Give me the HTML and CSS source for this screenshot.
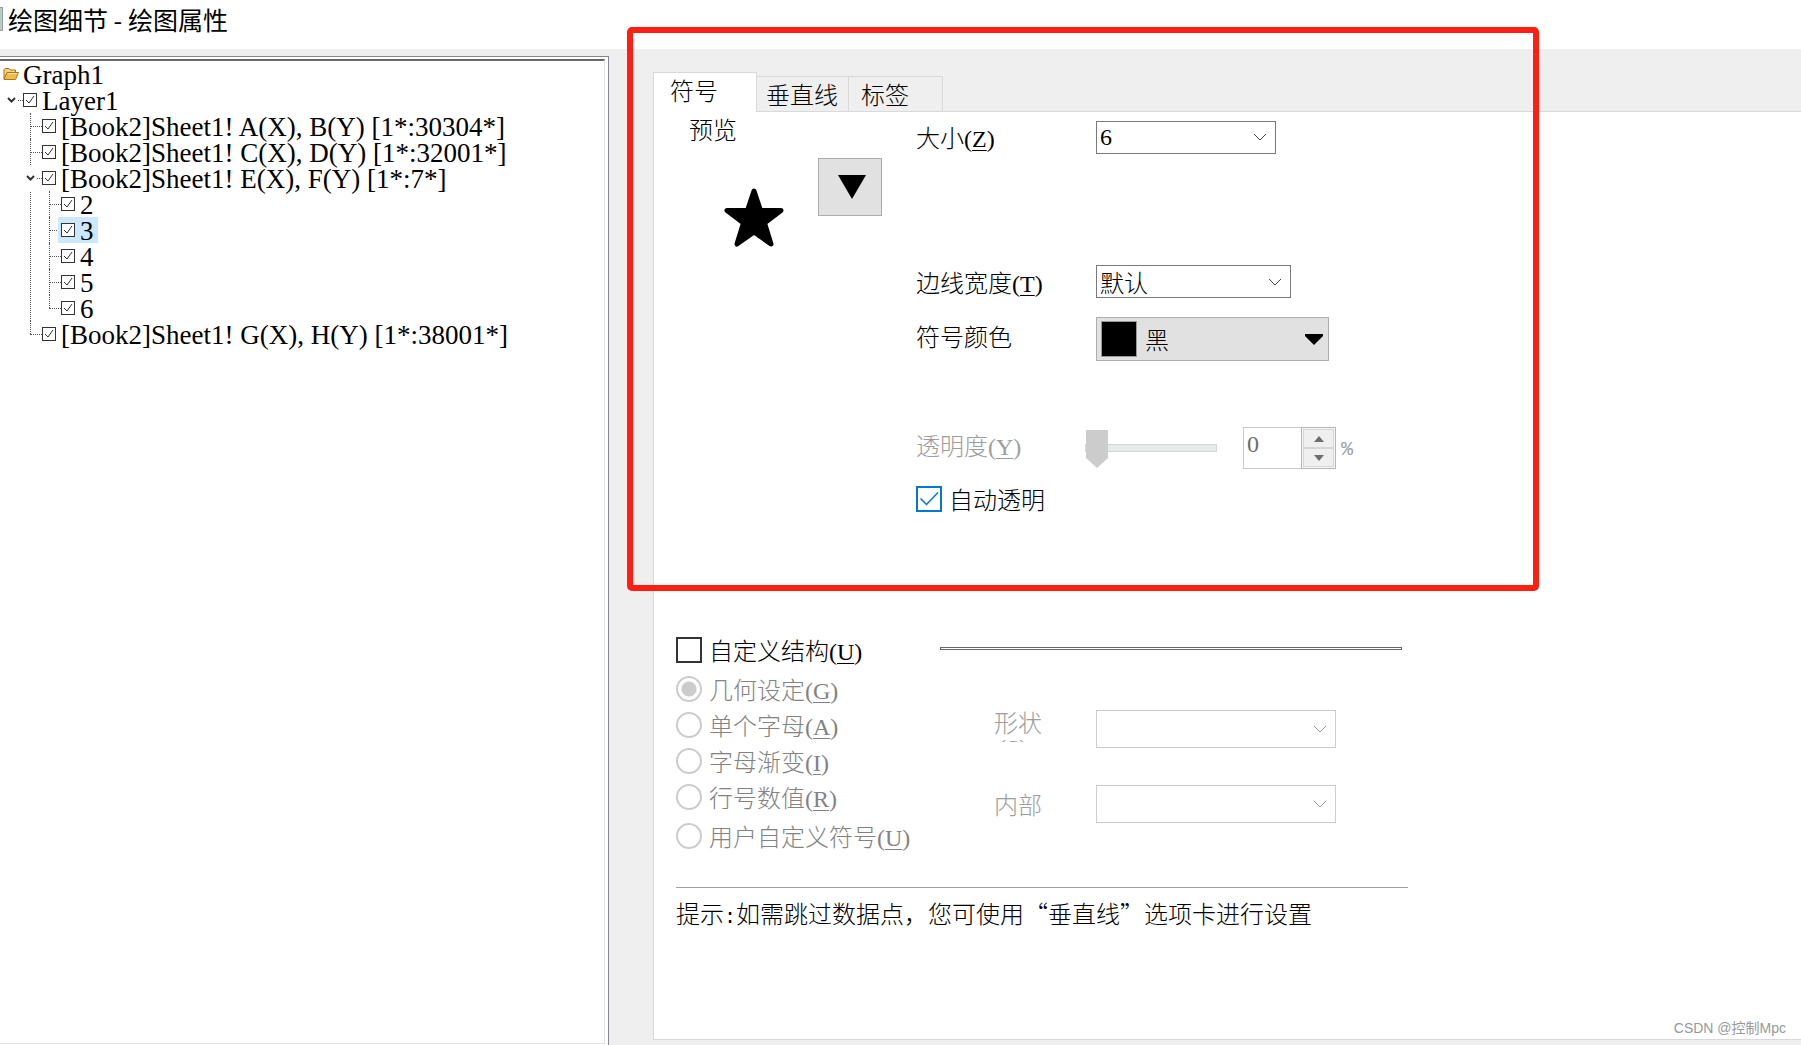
FILE: index.html
```html
<!DOCTYPE html>
<html lang="zh-CN">
<head>
<meta charset="utf-8">
<meta name="viewport" content="width=device-width, initial-scale=1">
<title>绘图细节 - 绘图属性</title>
<link rel="stylesheet" href="styles.css">
</head>
<body>
<header class="titlebar">
  <span class="app-icon"></span>
  <h1 class="title">绘图细节 - 绘图属性</h1>
</header>
<main class="dialog">
  <nav class="tree-pane">
    <div class="tree-view">
      <ul class="tree">
        <li class="root">
          <div class="root-row">
            <svg class="folder" width="16" height="14" viewBox="0 0 16 14"><path d="M1 12V2.500L2 1.500H6L7.500 3H12.500V5.500" fill="#f4d078" stroke="#a8771c"/><path d="M1 12.500L4 5.500H15.500L12.500 12.500Z" fill="#f3bd45" stroke="#a8771c"/><path d="M4.800 6.500H14" stroke="#ffe9a8"/></svg>
            <span>Graph1</span>
          </div>
          <ul class="branch">
            <li class="node">
              <div class="row">
                <button class="expander" aria-label="折叠"><svg width="9" height="6" viewBox="0 0 9 6"><path d="M1 1L4.500 4.500L8 1" fill="none" stroke="#333" stroke-width="2"/></svg></button>
                <label class="item"><input class="tick" type="checkbox" checked><span>Layer1</span></label>
              </div>
              <ul class="branch">
                <li class="node"><div class="row"><label class="item"><input class="tick" type="checkbox" checked><span>[Book2]Sheet1! A(X), B(Y) [1*:30304*]</span></label></div></li>
                <li class="node"><div class="row"><label class="item"><input class="tick" type="checkbox" checked><span>[Book2]Sheet1! C(X), D(Y) [1*:32001*]</span></label></div></li>
                <li class="node">
                  <div class="row">
                    <button class="expander" aria-label="折叠"><svg width="9" height="6" viewBox="0 0 9 6"><path d="M1 1L4.500 4.500L8 1" fill="none" stroke="#333" stroke-width="2"/></svg></button>
                    <label class="item"><input class="tick" type="checkbox" checked><span>[Book2]Sheet1! E(X), F(Y) [1*:7*]</span></label>
                  </div>
                  <ul class="branch">
                    <li class="node"><div class="row"><label class="item"><input class="tick" type="checkbox" checked><span>2</span></label></div></li>
                    <li class="node"><div class="row"><label class="item selected"><input class="tick" type="checkbox" checked><span>3</span></label></div></li>
                    <li class="node"><div class="row"><label class="item"><input class="tick" type="checkbox" checked><span>4</span></label></div></li>
                    <li class="node"><div class="row"><label class="item"><input class="tick" type="checkbox" checked><span>5</span></label></div></li>
                    <li class="node"><div class="row"><label class="item"><input class="tick" type="checkbox" checked><span>6</span></label></div></li>
                  </ul>
                </li>
                <li class="node"><div class="row"><label class="item"><input class="tick" type="checkbox" checked><span>[Book2]Sheet1! G(X), H(Y) [1*:38001*]</span></label></div></li>
              </ul>
            </li>
          </ul>
        </li>
      </ul>
    </div>
  </nav>

  <section class="settings">
    <div class="tabs" role="tablist">
      <button class="tab active" role="tab" aria-selected="true">符号</button>
      <button class="tab" role="tab">垂直线</button>
      <button class="tab last" role="tab">标签</button>
    </div>
    <div class="panel" role="tabpanel">
      <div class="symbol">
        <div class="preview">
          <div class="preview-label">预览</div>
          <div class="preview-body">
            <svg class="star" width="60" height="60" viewBox="0 0 60 60"><path d="M30 3L36.500 22.500H57L40.500 35L47 56L30 44L13 56L19.500 35L3 22.500H23.500Z" fill="#000" stroke="#000" stroke-width="5" stroke-linejoin="round"/></svg>
            <button class="pick" aria-label="选择符号"><svg width="28" height="24" viewBox="0 0 28 24"><path d="M0 0H28L14 24Z"/></svg></button>
          </div>
        </div>
        <div class="form">
          <div class="field size">
            <label class="name" for="size">大小<span class="key">(<u>Z</u>)</span></label>
            <span class="combo w180"><select id="size" class="latin"><option>6</option></select><svg class="chev" width="14" height="8" viewBox="0 0 14 8"><path d="M1 1L7 7L13 1"/></svg></span>
          </div>
          <div class="field edge">
            <label class="name" for="edge">边线宽度<span class="key">(<u>T</u>)</span></label>
            <span class="combo w195"><select id="edge"><option>默认</option></select><svg class="chev" width="14" height="8" viewBox="0 0 14 8"><path d="M1 1L7 7L13 1"/></svg></span>
          </div>
          <div class="field color">
            <span class="name raised">符号颜色</span>
            <button class="color-button"><span class="swatch"></span><span>黑</span><svg class="arrow" width="18" height="11" viewBox="0 0 18 11"><path d="M0 0H18V2L9 11L0 2Z"/></svg></button>
          </div>
          <div class="field opacity">
            <label class="name raised off" for="opacity">透明度<span class="key">(<u>Y</u>)</span></label>
            <input id="opacity" class="slider" type="range" min="0" max="100" value="0" disabled>
            <span class="spin">
              <input class="spin-text" type="text" value="0" aria-label="透明度数值" disabled>
              <span class="spin-buttons">
                <button aria-label="增加" disabled><svg width="10" height="6" viewBox="0 0 10 6"><path d="M0 6L5 0L10 6Z"/></svg></button>
                <button aria-label="减少" disabled><svg width="10" height="6" viewBox="0 0 10 6"><path d="M0 0L5 6L10 0Z"/></svg></button>
              </span>
            </span>
            <span class="percent">%</span>
          </div>
          <label class="check auto"><input class="box blue" type="checkbox" checked><span>自动透明</span></label>
        </div>
      </div>

      <div class="custom">
        <div class="choices">
          <label class="check"><input class="box" type="checkbox"><span>自定义结构<span class="key">(<u>U</u>)</span></span></label>
          <div class="radios">
            <label class="radio"><input type="radio" name="kind" checked disabled><span>几何设定<span class="key">(<u>G</u>)</span></span></label>
            <label class="radio"><input type="radio" name="kind" disabled><span>单个字母<span class="key">(<u>A</u>)</span></span></label>
            <label class="radio"><input type="radio" name="kind" disabled><span>字母渐变<span class="key">(<u>I</u>)</span></span></label>
            <label class="radio"><input type="radio" name="kind" disabled><span>行号数值<span class="key">(<u>R</u>)</span></span></label>
            <label class="radio user"><input type="radio" name="kind" disabled><span>用户自定义符号<span class="key">(<u>U</u>)</span></span></label>
          </div>
        </div>
        <div class="shape">
          <div class="groove"></div>
          <div class="shape-row top">
            <label class="shape-name clipped" for="shape"><span>形状</span><span class="key">(<u>S</u>)</span></label>
            <span class="combo w240 off"><select id="shape" disabled><option></option></select><svg class="chev" width="14" height="8" viewBox="0 0 14 8"><path d="M1 1L7 7L13 1"/></svg></span>
          </div>
          <div class="shape-row">
            <label class="shape-name" for="interior">内部</label>
            <span class="combo w240 off"><select id="interior" disabled><option></option></select><svg class="chev" width="14" height="8" viewBox="0 0 14 8"><path d="M1 1L7 7L13 1"/></svg></span>
          </div>
        </div>
      </div>
      <hr class="rule">
      <p class="tip">提示<span class="colon">:</span>如需跳过数据点，您可使用“垂直线”选项卡进行设置</p>
    </div>
    <div class="highlight"></div>
    <div class="watermark">CSDN @控制Mpc</div>
  </section>
</main>
</body>
</html>
```

FILE: styles.css
```css
* { box-sizing: border-box; }

body {
  margin: 0;
  min-height: 100vh;
  display: flex;
  flex-direction: column;
  background: #fff;
  color: #000;
  font: 300 24px/30px "Noto Sans CJK SC", sans-serif;
}

button, input, select { font: inherit; color: inherit; margin: 0; padding: 0; }
button, select, input { border-radius: 0; }
ul { list-style: none; margin: 0; padding: 0; }

.key, .latin, .tree, .spin-text {
  font-family: "Liberation Serif", serif;
  font-size: 24px;
  font-weight: 400;
}
.tree { font-size: 27px; }
.key { line-height: 24px; }
.colon, .percent { font-family: "Liberation Mono", monospace; font-size: 20px; font-weight: 400; line-height: 24px; }
u { text-decoration-thickness: 1px; text-underline-offset: 3px; }

/* Title bar */
.titlebar { display: flex; align-items: center; gap: 5px; height: 49px; padding-bottom: 11px; }
.app-icon { width: 3px; height: 24px; border: 1px solid #999; border-left: 0; background: #b9cfc6; }
.title { margin: 0; font-size: 25px; font-weight: 400; }

.dialog { flex: 1; display: flex; background: #efefef; }

/* Tree */
.tree-pane {
  flex: 0 0 609px;
  display: flex;
  margin-top: 7px;
  padding: 2px 1px 1px 0;
  border-top: 1px solid #828790;
  border-right: 1px solid #828790;
  background: #fff;
}
.tree-view {
  flex: 1;
  margin-right: 2px;
  border-top: 2px solid #696969;
  border-right: 1px solid #e3e3e3;
  border-bottom: 1px solid #e3e3e3;
}
.root-row { display: flex; align-items: center; gap: 4px; height: 26px; padding-left: 3px; }
.root > .branch { padding-left: 11px; }
.branch { padding-left: 19px; }
.node { position: relative; }
.node::before {
  content: "";
  position: absolute;
  top: 0;
  bottom: 0;
  left: 0;
  border-left: 1px dotted #555;
}
.node:last-child::before { bottom: auto; height: 13px; }
.row { position: relative; display: flex; align-items: center; height: 26px; }
.row::before { content: ""; width: 12px; margin-right: -3px; border-top: 1px dotted #555; }
.expander {
  position: absolute;
  left: -6px;
  display: grid;
  place-items: center;
  width: 13px;
  height: 26px;
  border: 0;
  background: #fff;
}
.item { position: relative; display: flex; align-items: center; gap: 5px; height: 26px; padding: 0 4px 0 3px; white-space: pre; }
.item span, .root-row span { padding-top: 2px; }
.selected { background: #cce8ff; }
.tick {
  appearance: none;
  width: 14px;
  height: 14px;
  border: 1px solid #333;
  background: #fff;
}
.tick:checked { background: #fff url("data:image/svg+xml,%3Csvg xmlns='http://www.w3.org/2000/svg' viewBox='0 0 12 12'%3E%3Cpath d='M2 6L5 9L10 2' fill='none' stroke='%23333'/%3E%3C/svg%3E"); }

/* Tabs and panel */
.settings { position: relative; flex: 1; display: flex; flex-direction: column; padding: 23px 0 5px 44px; }
.tabs { display: flex; align-items: flex-end; height: 39px; }
.tab {
  height: 35px;
  width: 92px;
  padding: 0 8px 0 9px;
  border: 1px solid #d9d9d9;
  border-width: 1px 1px 0 0;
  background: #efefef;
  text-align: left;
  white-space: nowrap;
}
.tab.last { width: 94px; padding-left: 12px; }
.tab.active { width: 104px; height: 40px; margin-bottom: -1px; padding: 0 0 6px 16px; border-left-width: 1px; background: #fff; z-index: 1; }
.panel { flex: 1; border: 1px solid #d9d9d9; border-right: 0; background: #fff; }

.symbol { display: flex; }
.preview { width: 262px; }
.preview-label { margin: 2px 0 0 35px; }
.preview-body { display: flex; margin: 14px 0 0 70px; gap: 34px; }
.star { margin-top: 30px; }
.pick { display: grid; place-items: center; width: 64px; height: 58px; padding-left: 4px; border: 1px solid #adadad; background: #e1e1e1; }

.field { display: flex; align-items: center; }
.name { width: 180px; height: 30px; white-space: nowrap; }
.raised { height: 36px; }
.name.off, .percent, .shape-name { color: #9d9d9d; }
.size { margin-top: 9px; height: 32px; }
.edge { margin-top: 112px; height: 33px; }
.color { margin-top: 19px; }
.opacity { margin-top: 66px; }

.combo { display: grid; align-items: center; }
.combo > * { grid-area: 1 / 1; }
.combo select {
  appearance: none;
  width: 100%;
  height: 33px;
  padding: 0 32px 0 3px;
  border: 1px solid #7a7a7a;
  background: #fff;
  opacity: 1;
}
.w180 { width: 180px; }
.w195 { width: 195px; }
.w240 { width: 240px; }
.chev { justify-self: end; margin-right: 9px; fill: none; stroke: #444; pointer-events: none; }
.combo.off select { height: 38px; border-color: #ccc; }
.off .chev { stroke: #999; }

.color-button { display: flex; align-items: center; gap: 8px; width: 233px; height: 44px; padding: 0 5px 0 4px; border: 1px solid #adadad; background: #e1e1e1; }
.swatch { width: 36px; height: 36px; border: 1px solid #999; background: #000; }
.arrow { margin-left: auto; }

.slider { appearance: none; width: 132px; height: 38px; margin-left: -11px; background: none; }
.slider::-webkit-slider-runnable-track { height: 8px; border: 1px solid #d6d6d6; background: #e7eaea; }
.slider::-webkit-slider-thumb {
  appearance: none;
  width: 22px;
  height: 38px;
  margin-top: -15px;
  background: #ccc;
  clip-path: polygon(0 0, 100% 0, 100% 74%, 50% 100%, 0 74%);
}
.spin { display: flex; width: 93px; height: 42px; margin-left: 26px; border: 1px solid #c8c8c8; }
.spin-text { flex: 1; min-width: 0; padding: 0 0 8px 3px; border: 0; background: #fff; color: #6d6d6d; }
.spin-buttons { display: grid; width: 35px; padding: 1px; border: 1px solid #b4b4ba; margin: -1px; background: #f8f8f8; }
.spin-buttons button { display: grid; place-items: center; border: 1px solid #d5d5d5; background: #efefef; fill: #6d6d6d; }
.percent { margin-left: 5px; padding-top: 4px; }

.check { display: flex; align-items: center; gap: 7px; height: 26px; white-space: nowrap; }
.auto { margin-top: 17px; }
.box { appearance: none; width: 26px; height: 26px; border: 2px solid #333; background: #fff; }
.box.blue { border-color: #0078d7; }
.box:checked { background: #fff url("data:image/svg+xml,%3Csvg xmlns='http://www.w3.org/2000/svg' viewBox='0 0 22 22'%3E%3Cpath d='M2.500 10.500L8.500 16.500L20 4.500' fill='none' stroke='%230078d7' stroke-width='1.500'/%3E%3C/svg%3E"); }

/* Custom construction */
.custom { display: flex; margin: 125px 0 0 22px; }
.choices { width: 264px; }
.radios { margin-top: 8px; color: #838383; }
.radio { display: flex; align-items: center; gap: 7px; height: 36px; white-space: nowrap; }
.radio.user { height: 42px; }
.radio input { appearance: none; width: 26px; height: 26px; border: 2px solid #ccc; border-radius: 50%; background: #fff; }
.radio input:checked { background: radial-gradient(circle, #ccc 7px, #fff 8px); }

.shape { display: flex; flex-direction: column; gap: 37px; }
.groove { width: 462px; height: 3px; margin: 10px 0 23px; border: 1px solid #696969; }
.shape-row { display: flex; align-items: center; padding-left: 54px; }
.shape-row.top { align-items: flex-start; }
.shape-name { width: 102px; }
/* The label box is one line high, so the accelerator on the second line is cut */
.clipped { display: flex; flex-direction: column; height: 32px; line-height: 24px; overflow: hidden; }
.clipped .key { padding: 2px 0 0 4px; }

.rule { width: 732px; height: 1px; margin: 30px 0 0 22px; border: 0; background: #a0a0a0; }
.tip { margin: 10px 0 0 22px; }

/* Overlays */
.highlight { position: absolute; top: -22px; left: 18px; width: 912px; height: 564px; border: 6px solid #ff1f12; border-radius: 5px; pointer-events: none; }
.watermark { position: absolute; right: 15px; bottom: 7px; color: #999; font: 400 14px/20px "Liberation Sans", "Noto Sans CJK SC", sans-serif; }
```
